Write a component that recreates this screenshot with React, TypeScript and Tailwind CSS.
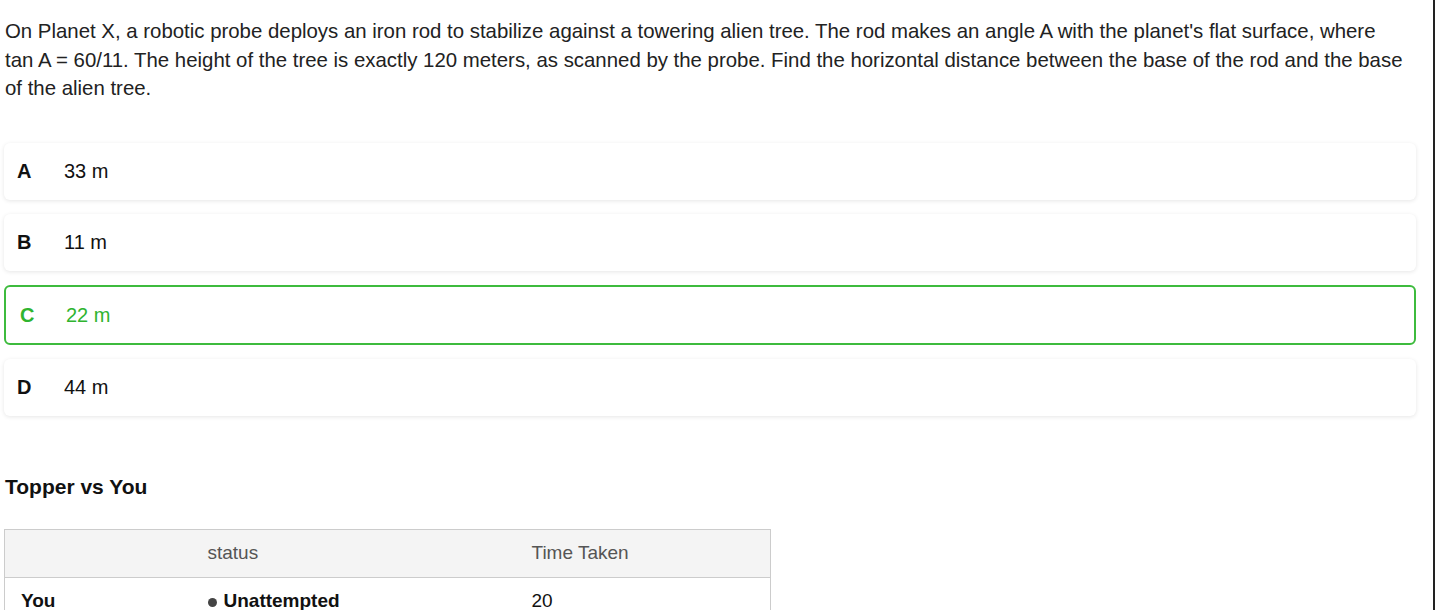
const OPTIONS = [
  { key: "A", value: "33 m" },
  { key: "B", value: "11 m" },
  { key: "C", value: "22 m", correct: true },
  { key: "D", value: "44 m" },
];

const Option = ({ letter, value, correct }: { letter: string; value: string; correct?: boolean }) => {
  if (correct) {
    return (
      <div className="flex items-center h-[60px] rounded-md border-2 border-[#3dbb3d] bg-white px-[14px] text-[#2fb42f]">
        <span className="w-[46px] font-bold text-[20px]">{letter}</span>
        <span className="text-[20px]">{value}</span>
      </div>
    );
  }
  return (
    <div className="flex items-center h-[57px] rounded-md bg-white px-[13px] text-[#111] shadow-[0_1px_4px_rgba(0,0,0,0.10)]">
      <span className="w-[47px] font-bold text-[20px]">{letter}</span>
      <span className="text-[20px]">{value}</span>
    </div>
  );
};

export default function App() {
  return (
    <div className="min-h-screen bg-white font-['Liberation_Sans',Arial,sans-serif] text-[#1a1a1a]">
      <div className="w-[1435px] h-[610px] overflow-hidden border-r-2 border-[#222]">
        <div className="w-[1420px] pl-[4px]">
          <p className="pt-[17px] pl-[1px] w-[1402px] text-[20.4px] leading-[28.5px] text-[#222]">
            On Planet X, a robotic probe deploys an iron rod to stabilize against a towering alien tree. The rod makes an angle A with the planet's flat surface, where tan A = 60/11. The height of the tree is exactly 120 meters, as scanned by the probe. Find the horizontal distance between the base of the rod and the base of the alien tree.
          </p>

          <div className="mt-[40px] flex flex-col gap-[14px] w-[1412px]">
            {OPTIONS.map((o) => (
              <Option key={o.key} letter={o.key} value={o.value} correct={o.correct} />
            ))}
          </div>

          <h2 className="mt-[55px] pl-[1px] text-[21px] font-bold text-[#111]">Topper vs You</h2>

          <table className="mt-[27px] w-[767px] border-collapse border border-[#ccc] text-[19px]">
            <thead>
              <tr className="bg-[#f4f4f4] h-[48px] text-[#555]">
                <th className="w-[187px] font-normal text-left px-4 border-b border-[#ccc]"></th>
                <th className="w-[324px] font-normal text-left px-4 border-b border-[#ccc]">status</th>
                <th className="font-normal text-left px-4 border-b border-[#ccc]">Time Taken</th>
              </tr>
            </thead>
            <tbody>
              <tr className="h-[48px] text-[#111]">
                <td className="px-4 font-bold">You</td>
                <td className="px-4 font-bold">
                  <span className="inline-block w-[9px] h-[9px] rounded-full bg-[#444] mr-[7px] align-middle"></span>
                  Unattempted
                </td>
                <td className="px-4">20</td>
              </tr>
            </tbody>
          </table>
        </div>
      </div>
    </div>
  );
}
